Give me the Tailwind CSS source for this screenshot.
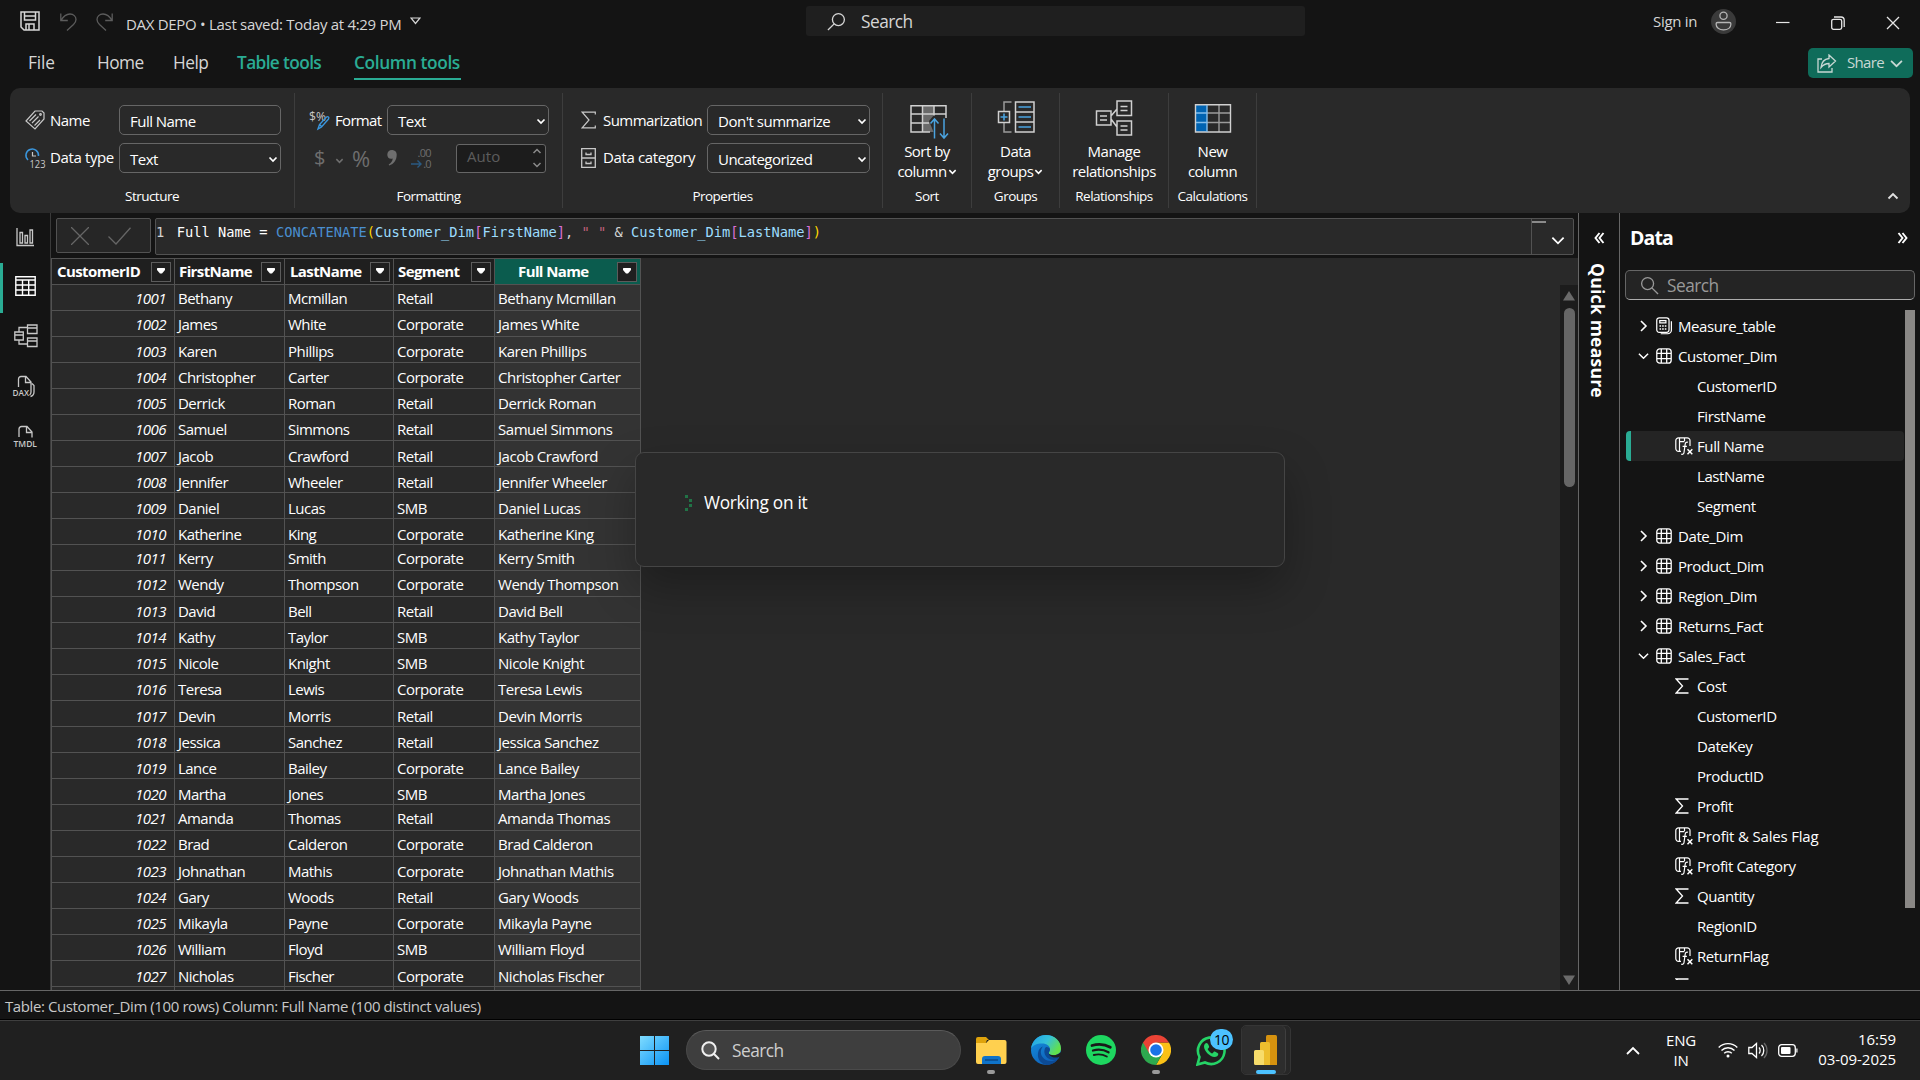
<!DOCTYPE html>
<html lang="en">
<head>
<meta charset="utf-8">
<title>DAX DEPO</title>
<script src="https://cdn.jsdelivr.net/npm/@tailwindcss/browser@4"></script>
</head>
<body class="w-[1920px] h-[1080px] overflow-hidden bg-[#141414] text-white font-['Open_Sans','Noto_Sans',sans-serif] text-[15px] tracking-[-0.035em] whitespace-nowrap flex flex-col relative">

<svg class="hidden">
  <symbol id="i-down" viewBox="0 0 10 10"><path d="M1.500 3.500L5 7l3.500-3.500" fill="none" stroke="currentColor" stroke-width="1.700"/></symbol>
  <symbol id="i-right" viewBox="0 0 10 16"><path d="M2 3l5 5-5 5" fill="none" stroke="currentColor" stroke-width="1.600"/></symbol>
  <symbol id="i-open" viewBox="0 0 12 8"><path d="M1 1.500l5 5 5-5" fill="none" stroke="currentColor" stroke-width="1.600"/></symbol>
  <symbol id="i-search" viewBox="0 0 20 20"><g fill="none" stroke="currentColor" stroke-width="1.400"><circle cx="12" cy="8" r="6.300"/><path d="M7.500 12.500L1 19"/></g></symbol>
  <symbol id="i-table" viewBox="0 0 16 16"><g fill="none" stroke="currentColor" stroke-width="1.300"><rect x=".8" y=".8" width="14.400" height="14.400" rx="3"/><path d="M5.300 1v14M10.700 1v14M1 5.300h14M1 10.700h14"/></g></symbol>
  <symbol id="i-measure" viewBox="0 0 18 19"><g fill="none" stroke="currentColor" stroke-width="1.300"><rect x=".8" y=".8" width="13" height="15.400" rx="2.600"/><path d="M16.300 4.500v9.200a4 4 0 0 1-4 4H5M4 3.800h6.500v2.400H4z"/></g><g fill="currentColor"><path d="M3.700 8.600h1.700v1.700H3.700zM6.500 8.600h1.700v1.700H6.500zM9.300 8.600H11v1.700H9.300zM3.700 11.800h1.700v1.700H3.700zM6.500 11.800h1.700v1.700H6.500zM9.300 11.800H11v1.700H9.300z"/></g></symbol>
  <symbol id="i-sigma" viewBox="0 0 15 18"><path d="M14.300 3.500V1.200H1.200L8 9l-6.800 7.800h13.100v-2.300" fill="none" stroke="currentColor" stroke-width="1.200"/></symbol>
  <symbol id="i-sum" viewBox="0 0 14 16"><path d="M13.500 1H1.200L7.500 8 1.200 15h12.300" fill="none" stroke="currentColor" stroke-width="1.300"/></symbol>
  <symbol id="i-calc" viewBox="0 0 18 18"><g fill="none" stroke="currentColor" stroke-width="1.200"><path d="M6 14.400H3.600A2.800 2.800 0 0 1 .8 11.600V3.600A2.800 2.800 0 0 1 3.600.800h8.600A2.800 2.800 0 0 1 15 3.600V9M4.500 1v13.300M4.500 4.600h5M9.500 1v3"/><path d="M13 5.300c-1.700-.6-2.600.3-2.800 1.700L9 15.500c-.2 1.500-1.200 2.100-2.700 1.600M7.600 9.400h4.300"/><path d="M12.500 12.300l4.800 5M17.300 12.300l-4.800 5" stroke-width="1.500"/></g></symbol>
  <symbol id="i-filter" viewBox="0 0 8 6"><path d="M0 .5Q0 0 .5 0h7Q8 0 8 .5V2L5 5.500H3L0 2z" fill="#fff"/></symbol>
</svg>

<!-- title bar -->
<header class="h-[45px] shrink-0 flex items-start text-[#d6d6d6]">
  <svg class="ml-[20px] mt-[11px] w-[20px] h-[20px] shrink-0" viewBox="0 0 20 20" fill="none" stroke="#d6d6d6" stroke-width="1.500"><path d="M1 1h18v18H4l-3-3zM4.500 1v8h11V1M6 19v-6h8v6M9 13v6M4.500 5h11" /></svg>
  <svg class="ml-[20px] mt-[13px] w-[17px] h-[18px] shrink-0" viewBox="0 0 17 18" fill="none" stroke="#5c5c5c" stroke-width="1.300"><path d="M.8.500v7h7M1 7.500C3.500 3 6.500 1 10 1c3.500 0 6 2.500 6 5.500 0 2-1 3.500-2.500 5L7 17.500"/></svg>
  <svg class="ml-[19px] mt-[13px] w-[17px] h-[18px] shrink-0" viewBox="0 0 17 18" fill="none" stroke="#5c5c5c" stroke-width="1.300"><path d="M16.200.500v7h-7M16 7.500C13.500 3 10.500 1 7 1 3.500 1 1 3.500 1 6.500c0 2 1 3.500 2.500 5l6.500 6"/></svg>
  <span class="ml-[13px] mt-[13px] w-[284px] leading-[22px] tracking-[-0.020em]">DAX DEPO • Last saved: Today at 4:29 PM</span>
  <svg class="mt-[17px] w-[11px] h-[8px] shrink-0" viewBox="0 0 11 8" fill="none" stroke="#d6d6d6" stroke-width="1.200"><path d="M1 1h9L5.500 6.500z"/></svg>
  <div class="ml-[385px] mt-[6px] w-[499px] h-[30px] rounded-[3px] bg-[#1f1f1f] flex items-center pl-[21px] text-[17.300px]">
    <svg class="w-[19px] h-[19px]"><use href="#i-search"/></svg><span class="ml-[15px] mt-px tracking-[-0.030em]">Search</span>
  </div>
  <span class="ml-[348px] mt-[10px] w-[58px] leading-[22px] tracking-[-0.020em]">Sign in</span>
  <svg class="mt-[9px] w-[25px] h-[25px] shrink-0" viewBox="0 0 25 25"><circle cx="12.500" cy="12.500" r="12.500" fill="#3a3a3a"/><g fill="none" stroke="#b5b5b5" stroke-width="1.300"><circle cx="12.500" cy="6.800" r="3.600"/><path d="M6.500 13.500h12a1.400 1.400 0 0 1 1.400 1.400c0 3.600-3 6-7.400 6s-7.400-2.400-7.400-6a1.400 1.400 0 0 1 1.400-1.400z"/></g></svg>
  <svg class="ml-[40px] mt-[15px] w-[14px] h-[14px] shrink-0" viewBox="0 0 14 14" stroke="#e6e6e6" stroke-width="1.200"><path d="M0 7.500h13.500"/></svg>
  <svg class="ml-[41px] mt-[16px] w-[14px] h-[14px] shrink-0" viewBox="0 0 14 14" fill="none" stroke="#e6e6e6" stroke-width="1.300"><rect x=".7" y="3.300" width="10" height="10" rx="1.800"/><path d="M3 1h7a3.200 3.200 0 0 1 3.200 3.200V11"/></svg>
  <svg class="ml-[41px] mt-[16px] w-[14px] h-[14px] shrink-0" viewBox="0 0 14 14" stroke="#e6e6e6" stroke-width="1.300"><path d="M1 1l12 12M13 1L1 13"/></svg>
</header>

<!-- ribbon tabs -->
<nav class="h-[43px] shrink-0 flex items-start text-[17.300px] leading-[24px] text-[#d6d6d6] pl-[28px]">
  <span class="w-[69px] mt-[6px] tracking-[-0.010em]">File</span>
  <span class="w-[76px] mt-[6px]">Home</span>
  <span class="w-[64px] mt-[6px]">Help</span>
  <span class="w-[117px] mt-[6px] font-semibold text-[#2aac94] tracking-[-0.036em]">Table tools</span>
  <span class="w-[107px] mt-[6px] h-[29px] font-semibold text-[#2aac94] border-b-2 border-[#2aac94] tracking-[-0.022em]">Column tools</span>
  <button class="ml-[1347px] mt-[3px] w-[105px] h-[30px] rounded-[5px] bg-[#0f6c5a] flex items-center pl-[9px] text-[15px] text-[#c8d8d4]">
    <svg class="w-[20px] h-[19px]" viewBox="0 0 20 19" fill="none" stroke="#c8d8d4" stroke-width="1.300"><path d="M5 5H1v13h14v-4"/><path d="M12 1l6.500 6-6.500 6V9.500C8.500 9.500 6 11 4 13.500 4.500 8.500 7.500 5 12 4.500z"/></svg>
    <span class="ml-[10px] w-[43px] mb-[2px] text-left tracking-[-0.045em]">Share</span>
    <svg class="w-[13px] h-[9px]" viewBox="0 0 12 8"><use href="#i-open"/></svg>
  </button>
</nav>

<!-- ribbon -->
<section class="mx-[10px] h-[125px] shrink-0 rounded-[10px] bg-[#292929] flex py-[5px] text-[15px] relative">
  <div class="w-[285px] border-r border-[#3d3d3d] flex flex-col pt-3">
    <div class="h-[30px] flex items-center pl-[15px]">
      <svg class="w-[20px] h-[20px]" viewBox="0 0 20 20" fill="none" stroke="#c8c8c8" stroke-width="1.200"><path d="M10 1h7l2 2v6l-9 10L1 11zM4.500 11L11 4.500M7 13l6.500-6.500M9.500 15.500L15 10"/><circle cx="15.500" cy="4.500" r=".8"/></svg>
      <span class="ml-[5px] w-[69px]">Name</span>
      <div class="w-[162px] h-[30px] rounded-[5px] border border-[#666] pl-[10px] leading-[30px]">Full Name</div>
    </div>
    <div class="mt-2 h-[30px] flex items-center pl-[15px]">
      <svg class="w-[21px] h-[21px] overflow-visible" viewBox="0 0 21 21" fill="none" stroke-width="1.500"><path d="M3 12A6.300 6.300 0 1 1 13.500 8" stroke="#3a96dd"/><path d="M7.500 4v4H11" stroke="#c8c8c8" stroke-width="1.200"/><text x="4.500" y="20" font-size="10" letter-spacing="0" fill="#c8c8c8" textLength="16" lengthAdjust="spacingAndGlyphs">123</text></svg>
      <span class="ml-[4px] w-[69px] mb-[2px] tracking-[-0.025em]">Data type</span>
      <div class="w-[162px] h-[30px] rounded-[5px] border border-[#666] pl-[10px] pr-[2px] pt-[2px] leading-[28px] flex items-center justify-between"><span>Text</span><svg class="w-[10px] h-[10px]"><use href="#i-down"/></svg></div>
    </div>
    <div class="mt-[13px] text-center text-[13.500px] leading-5">Structure</div>
  </div>
  <div class="w-[268px] border-r border-[#3d3d3d] flex flex-col pt-3">
    <div class="h-[30px] flex items-center pl-[14px]">
      <svg class="w-[21px] h-[21px] overflow-visible" viewBox="0 0 21 21"><text x="0" y="11" font-size="12" letter-spacing="0" fill="#c8c8c8" textLength="17" lengthAdjust="spacingAndGlyphs">$%</text><path d="M9 19l1.500-4.500 7-7.500c1.500-1 3 .5 2 2l-7 8zM10.500 14.500l2.500 2.500" fill="none" stroke="#3a96dd" stroke-width="1.400"/></svg>
      <span class="ml-[5px] w-[52px] tracking-[-0.045em]">Format</span>
      <div class="w-[162px] h-[30px] rounded-[5px] border border-[#666] pl-[10px] pr-[2px] pt-[2px] leading-[28px] flex items-center justify-between"><span>Text</span><svg class="w-[10px] h-[10px]"><use href="#i-down"/></svg></div>
    </div>
    <div class="mt-2 h-[30px] flex items-center pl-[19px] text-[#6e6e6e]">
      <span class="w-[21px] text-[20px]">$</span><svg class="w-[9px] h-[9px] mt-1"><use href="#i-down"/></svg>
      <span class="ml-[8px] w-[35px] text-[22px] tracking-normal">%</span>
      <svg class="w-[10px] h-[16px]" viewBox="0 0 10 16"><path d="M5 0a4.500 4.500 0 0 1 4.700 4.800C9.700 10 7 14 2.200 15.600L1.700 14.500c2.600-1.600 3.900-3.500 4-6C2.500 9.500.3 7.500.3 4.700.3 2 2.300 0 5 0z" fill="#6e6e6e"/></svg>
      <div class="ml-[14px] w-[22px] h-[22px] flex flex-col items-end text-[11px] leading-[11px] tracking-[-0.060em]">
        <span class="h-[11px] mr-[2px]">.00</span>
        <span class="h-[11px] mr-[2px] flex items-center"><svg class="w-[11px] h-[8px] mr-px" viewBox="0 0 11 8"><path d="M0 4h10M6.500.500L10 4 6.500 7.500" stroke="#2a5a82" stroke-width="1.400" fill="none"/></svg>.0</span>
      </div>
      <div class="ml-[23px] w-[90px] h-[29px] rounded-[3px] border border-[#666] bg-[#1c1c1c] pl-[10px] pr-[3px] flex items-center justify-between text-[15px] text-[#5c5c5c]"><span class="tracking-[0.005em] mb-[4px]">Auto</span>
        <svg class="w-[10px] h-[22px] text-[#8a8a8a]" viewBox="0 0 10 22" fill="none" stroke="currentColor" stroke-width="1.500"><path d="M1.500 6L5 2.500 8.500 6M1.500 16L5 19.500 8.500 16"/></svg></div>
    </div>
    <div class="mt-[13px] text-center text-[13.500px] leading-5">Formatting</div>
  </div>
  <div class="w-[320px] border-r border-[#3d3d3d] flex flex-col pt-3">
    <div class="h-[30px] flex items-center pl-[18px]">
      <svg class="w-[15px] h-[18px] text-[#c8c8c8]"><use href="#i-sigma"/></svg>
      <span class="ml-[7px] w-[104px] tracking-[-0.036em]">Summarization</span>
      <div class="w-[163px] h-[30px] rounded-[5px] border border-[#666] pl-[10px] pr-[2px] pt-[2px] leading-[28px] flex items-center justify-between"><span class="tracking-[-0.032em]">Don't summarize</span><svg class="w-[10px] h-[10px]"><use href="#i-down"/></svg></div>
    </div>
    <div class="mt-2 h-[30px] flex items-center pl-[18px]">
      <svg class="w-[15px] h-[20px]" viewBox="0 0 15 20" fill="none" stroke="#c8c8c8" stroke-width="1.300"><path d="M.7.700h13.600v18.600H.7zM.7 10h13.600M5 4.500v2h5v-2M5 13.500v2h5v-2"/></svg>
      <span class="ml-[7px] w-[104px] mb-[2px] tracking-[-0.025em]">Data category</span>
      <div class="w-[163px] h-[30px] rounded-[5px] border border-[#666] pl-[10px] pr-[2px] pt-[2px] leading-[28px] flex items-center justify-between"><span>Uncategorized</span><svg class="w-[10px] h-[10px]"><use href="#i-down"/></svg></div>
    </div>
    <div class="mt-[13px] text-center text-[13.500px] leading-5">Properties</div>
  </div>
  <div class="w-[89px] border-r border-[#3d3d3d] flex flex-col items-center leading-5">
    <svg class="mt-[7px] ml-[3px] h-[40px] w-[40px]" viewBox="0 0 40 40"><path d="M13 5h12v27H13z" fill="#6a6a6a"/><g fill="none" stroke="#d0d0d0" stroke-width="1.500"><path d="M37 18V5.700H2V32h19M2 14h35M2 23h18M13.500 5.500V32M25 5.500V18" /></g><path d="M20 21l5-6 4 5v-2h9v15H25z" fill="#292929"/><path d="M25.500 38.500V19M21.500 23.500l4-4.500 4 4.500M35 18.500V38M31 33.500l4 4.500 4-4.500" stroke="#4aa3df" stroke-width="1.500" fill="none"/></svg>
    <span class="mt-px">Sort by</span><span class="flex items-center">column<svg class="ml-px w-[9px] h-[9px]"><use href="#i-down"/></svg></span>
    <span class="mt-[5px] text-[13.500px]">Sort</span>
  </div>
  <div class="w-[88px] border-r border-[#3d3d3d] flex flex-col items-center leading-5">
    <svg class="mt-[6px] h-[40px] w-[38px]" viewBox="0 0 38 40"><g fill="none" stroke="#d0d0d0" stroke-width="1.500"><path d="M18.500 3H37v30H18.500zM18.500 13H37M18.500 23H37"/><path d="M14.500 3H7v9M7 24v9h7.500" stroke="#9a9a9a"/><path d="M1.500 12.500h11v11h-11z"/></g><path d="M21.500 8H34M21.500 18H34M21.500 28H34M7 14.500v7M3.500 18h7" stroke="#4aa3df" stroke-width="1.600"/></svg>
    <span class="mt-[2px]">Data</span><span class="flex items-center">groups<svg class="ml-px w-[9px] h-[9px]"><use href="#i-down"/></svg></span>
    <span class="mt-[5px] text-[13.500px]">Groups</span>
  </div>
  <div class="w-[109px] border-r border-[#3d3d3d] flex flex-col items-center leading-5">
    <svg class="mt-[6px] h-[40px] w-[38px]" viewBox="0 0 38 40" fill="none" stroke="#d0d0d0" stroke-width="1.500"><path d="M1.500 12h14.500v14H1.500zM22 2h14.500v14.500H22zM22 22h14.500v14H22zM16 17l6-7M16 20l6 8M5 17h7M5 21h7M25.500 7.500h7M25.500 11.500h7M25.500 27h7M25.500 31h7"/></svg>
    <span class="mt-[2px]">Manage</span><span>relationships</span>
    <span class="mt-[5px] text-[13.500px]">Relationships</span>
  </div>
  <div class="w-[88px] border-r border-[#3d3d3d] flex flex-col items-center leading-5">
    <svg class="mt-[6px] h-[40px] w-[38px]" viewBox="0 0 38 40"><path d="M1.500 5.500H13V33H1.500z" fill="#0063b1"/><g fill="none" stroke-width="1.400"><path d="M13 14h23M13 23.500h23M25 6v27" stroke="#9a9a9a"/><path d="M1.500 5.700h35V33h-35z" stroke="#d0d0d0"/><path d="M13 6v27M2 14h11M2 23.500h11" stroke="#83beec"/></g></svg>
    <span class="mt-[2px]">New</span><span>column</span>
    <span class="mt-[5px] text-[13.500px]">Calculations</span>
  </div>
  <svg class="ml-auto mr-[11px] self-end mb-[8px] w-[12px] h-[8px]" viewBox="0 0 12 8" fill="none" stroke="#e0e0e0" stroke-width="1.900"><path d="M1.500 6.500L6 2l4.500 4.500"/></svg>
</section>

<!-- workspace -->
<main class="h-[777px] shrink-0 flex overflow-hidden">
  <aside class="w-[51px] shrink-0 border-r border-[#3a3a3a] flex flex-col text-[#c8c8c8]">
    <div class="h-[50px] flex items-center pl-[16px]"><svg class="mt-[-2px] w-[19px] h-[19px]" viewBox="0 0 19 19" fill="none" stroke="currentColor" stroke-width="1.300"><path d="M1 0v17.500h17M4 4.500h2.500V15H4zM9 7.500h2.500V15H9zM14 2h2.500v13H14z"/></svg></div>
    <div class="h-[50px] flex items-center border-l-[3px] border-[#2aac94] pl-[12px] text-white"><svg class="mt-[-5px] w-[21px] h-[20px]" viewBox="0 0 21 20" fill="none" stroke="currentColor" stroke-width="1.400"><path d="M.8.800h19.400v18.400H.8zM1 4h19M1 9h19M1 14h19M7.500 4v15M13.700 4v15"/></svg></div>
    <div class="h-[50px] flex items-center pl-[14px]"><svg class="mt-[-4px] w-[24px] h-[24px]" viewBox="0 0 24 24" fill="none" stroke="currentColor" stroke-width="1.300"><path d="M.8 8h8.500v8H.8zM.8 11h8.500M13.500 1H23v8.500h-9.500zM13.500 4H23M13.500 14H23v8.500h-9.500zM13.500 17H23M5 8V3.500h8.500M5 16v4h8.500"/></svg></div>
    <div class="h-[50px] flex items-center pl-[12px]"><svg class="mt-[-3px] w-[24px] h-[23px]" viewBox="0 0 24 23" fill="none" stroke="currentColor" stroke-width="1.300"><path d="M6.500 12V4a2.500 2.500 0 0 1 2.500-2.500h5L19 7v10c0 1.500-.5 2.500-1.500 3M13.500 1.500v6H19M20 8.500l2 2V17c0 2.500-1.500 4-3.500 4.500"/><text x=".5" y="21" font-size="9" letter-spacing="0" font-weight="600" fill="currentColor" stroke="none" textLength="16.500" lengthAdjust="spacingAndGlyphs">DAX</text></svg></div>
    <div class="h-[50px] flex items-center pl-[13px]"><svg class="mt-[-3px] w-[25px] h-[23px] overflow-visible" viewBox="0 0 25 23" fill="none" stroke="currentColor" stroke-width="1.300"><path d="M6 12V4a2.500 2.500 0 0 1 2.500-2.500H14L19 7v5.500M13.500 1.500v6H19"/><text x=".5" y="21.500" font-size="9.500" letter-spacing="0" font-weight="600" fill="currentColor" stroke="none" textLength="23.500" lengthAdjust="spacingAndGlyphs">TMDL</text></svg></div>
  </aside>

  <div class="w-[1527px] shrink-0 flex flex-col">
    <div class="h-[45px] shrink-0 pl-[5px] pt-[5px] flex">
      <div class="w-[95px] h-[35px] rounded-[2px] border border-[#525252] bg-[#262626] flex items-center">
        <svg class="ml-[14px] w-[18px] h-[18px]" viewBox="0 0 18 18" stroke="#666" stroke-width="1.300"><path d="M0 0l18 18M18 0L0 18"/></svg>
        <svg class="ml-[19px] w-[23px] h-[18px]" viewBox="0 0 23 18" stroke="#666" stroke-width="1.300" fill="none"><path d="M.5 9.500l7.500 7.500L22.500.8"/></svg>
      </div>
      <div class="ml-1 w-[1419px] h-[37px] rounded-[2px] border border-[#525252] bg-[#292929] flex justify-between">
        <pre class="pt-[3px] tracking-normal font-['DejaVu_Sans_Mono',monospace] text-[13.720px] leading-[20px] text-[#d4d4d4]">1<span class="inline-block w-[12.500px]"></span><span class="text-white">Full Name = </span><span class="text-[#4a8fd0]">CONCATENATE</span><span class="text-[#ffd700]">(</span><span class="text-[#9cdcfe]">Customer_Dim</span><span class="text-[#da70d6]">[</span><span class="text-[#9cdcfe]">FirstName</span><span class="text-[#da70d6]">]</span>, <span class="text-[#c0607a]">" "</span> &amp; <span class="text-[#9cdcfe]">Customer_Dim</span><span class="text-[#da70d6]">[</span><span class="text-[#9cdcfe]">LastName</span><span class="text-[#da70d6]">]</span><span class="text-[#ffd700]">)</span></pre>
        <div class="w-[42px] border-l border-[#525252] flex flex-col">
          <div class="mt-[2px] h-[2px] w-[14px] bg-[#8a8a8a]"></div>
          <svg class="mt-[13px] ml-[19px] w-[14px] h-[9px]" viewBox="0 0 12 8"><use href="#i-open"/></svg>
        </div>
      </div>
    </div>
    <div class="grow min-h-0 bg-[#292929] flex">
      <div id="grid" class="w-[590px] h-full overflow-hidden border-l border-[#525252] shrink-0">
        <div class="h-[27px] border-y border-[#525252] bg-[#1f1f1f] grid grid-cols-[123px_110px_109px_101px_146px] font-bold text-[15px] tracking-[-0.040em] leading-[25px]" id="head"></div>
      </div>
      <div class="grow"></div>
      <div class="mt-[27px] w-[18px] bg-[#1c1c1c] flex flex-col items-center pt-[6px]">
        <svg class="w-[12px] h-[10px]" viewBox="0 0 12 10"><path d="M6 0l6 9.500H0z" fill="#6a6a6a"/></svg>
        <div class="mt-[7px] w-[11px] h-[179px] rounded-full bg-[#666]"></div>
        <svg class="mt-auto mb-[5px] w-[12px] h-[10px]" viewBox="0 0 12 10"><path d="M6 10l6-9.500H0z" fill="#6a6a6a"/></svg>
      </div>
    </div>
  </div>

  <section class="w-[41px] shrink-0 border-l border-[#666] flex flex-col items-center">
    <svg class="mt-[19px] w-[11px] h-[12px]" viewBox="0 0 11 12" fill="none" stroke="#fff" stroke-width="1.900"><path d="M5.500 1L1.500 6l4 5M9.500 1l-4 5 4 5"/></svg>
    <div class="mt-[19px] mr-[2px] [writing-mode:vertical-rl] leading-[24px] text-[17.500px] font-bold tracking-[0.014em]">Quick measure</div>
  </section>

  <section class="w-[301px] shrink-0 border-l border-[#666] pl-[5px] flex flex-col">
    <div class="h-[57px] flex items-center pl-[5px] pr-[12px] pb-[8px]">
      <span class="text-[19.500px] font-bold tracking-[-0.045em]">Data</span>
      <svg class="ml-auto w-[11px] h-[12px]" viewBox="0 0 11 12" fill="none" stroke="#fff" stroke-width="1.900"><path d="M1.500 1l4 5-4 5M5.500 1l4 5-4 5"/></svg>
    </div>
    <div class="w-[290px] h-[30px] rounded-[5px] border border-[#666] border-b-[#adadad] bg-[#242424] flex items-center pl-[14px] text-[17.300px] text-[#999]">
      <svg class="w-[19px] h-[19px] -scale-x-100"><use href="#i-search"/></svg><span class="ml-[8px] mt-px">Search</span>
    </div>
    <div class="mt-[10px] h-[670px] w-[290px] flex overflow-hidden">
      <div id="tree" class="w-[280px] mt-px shrink-0 leading-[30px] text-[15px] tracking-[-0.027em]"></div>
      <div class="w-[10px] h-[598px] bg-[#8a8886]"></div>
    </div>
  </section>
</main>

<footer class="h-[30px] shrink-0 border-t border-[#666] border-b border-b-black pl-[5px] leading-[31px] text-[15px] tracking-[-0.027em] text-[#c8c8c8]">Table: Customer_Dim (100 rows) Column: Full Name (100 distinct values)</footer>

<!-- taskbar -->
<div class="h-[60px] shrink-0 border-t border-[#3f3f3f] bg-[#202020] flex items-start">
  <svg class="ml-[640px] mt-[15px] w-[29px] h-[29px] shrink-0" viewBox="0 0 29 29"><defs><linearGradient id="w" x1="0" y1="0" x2="1" y2="1"><stop offset="0" stop-color="#7fdcff"/><stop offset="1" stop-color="#0a93f5"/></linearGradient></defs><path d="M0 0h14v14H0zM15 0h14v14H15zM0 15h14v14H0zM15 15h14v14H15z" fill="url(#w)"/></svg>
  <div class="ml-[17px] mt-[9px] w-[275px] h-[40px] shrink-0 rounded-full bg-[#3e3e3e] border border-[#4a4a4a] border-t-[#5a5a5a] flex items-center pl-[14px] text-[17.300px] text-[#cfcfcf]">
    <svg class="w-[19px] h-[19px]" viewBox="0 0 19 19" fill="none" stroke="#f0f0f0" stroke-width="2"><circle cx="8" cy="8" r="6.700" fill="#555"/><path d="M12.800 12.800L18 18"/></svg><span class="ml-[12px] mt-px">Search</span>
  </div>
  <div class="ml-[15px] mt-[15px] w-[30px] shrink-0 flex flex-col items-center">
    <svg class="w-[31px] h-[29px]" viewBox="0 0 31 29"><path d="M0 3a2 2 0 0 1 2-2h8l3 3h-2l-2 5H0z" fill="#dfa30c"/><path d="M0 7h10l3-3h15.500a2 2 0 0 1 2 2v20a2 2 0 0 1-2 2H2a2 2 0 0 1-2-2z" fill="#ffd04f"/><path d="M6 28v-5a3 3 0 0 1 3-3h13a3 3 0 0 1 3 3v5z" fill="#0f73c9"/><path d="M9 24h13" stroke="#0a3f78" stroke-width="1.200"/></svg>
    <div class="mt-[5px] w-2 h-1 rounded-full bg-[#9a9a9a]"></div>
  </div>
  <svg class="ml-[25px] mt-[14px] w-[30px] h-[30px] shrink-0" viewBox="0 0 30 30"><defs><linearGradient id="e1" x1="0" y1="0" x2="1" y2=".5"><stop offset="0" stop-color="#1e9fe8"/><stop offset=".55" stop-color="#35c1d8"/><stop offset="1" stop-color="#62e04c"/></linearGradient><linearGradient id="e2" x1="0" y1="0" x2=".7" y2="1"><stop offset="0" stop-color="#1593e0"/><stop offset="1" stop-color="#0e5cb5"/></linearGradient></defs><circle cx="15" cy="15" r="15" fill="url(#e2)"/><path d="M0 14C.8 6 7 0 15 0c8.500 0 15 6 15 13.500 0 4-3 6.800-7 6.800-3 0-5.300-1-5.300-2.300 0-1 1.300-1.500 1.300-4 0-2.800-3-5.500-8-5.500C5.500 8.500 1 10.500 0 14z" fill="url(#e1)"/><path d="M12 11.500c-2.500 2.500-3 7-.5 10.500 3 4.500 9.500 5.500 15.500 2-3 4-7 6-11.500 6C10 29 6 24 7 18c.5-3.500 2.500-5.800 5-6.500z" fill="#0c4a94"/><path d="M17.700 18c0 1.300 2.300 2.300 5.300 2.300 2.300 0 4.500-1 5.800-2.500.5 2-.5 4.700-1.800 6.200-6 2.500-12.500-.5-13.500-6-.3-2.500 0-4.500 1.500-6 2.500 0 4 1 4 2.500s-1.300 2.500-1.300 3.500z" fill="#0c4a94"/><path d="M17.700 18c0 1.300 2.300 2.300 5.300 2.300 2.300 0 4.500-1 7-3.300.5 1.700 0 3.500-1.300 4.700-5 2-10.500.3-11-3.700z" fill="#202020"/></svg>
  <svg class="ml-[25px] mt-[14px] w-[30px] h-[30px] shrink-0" viewBox="0 0 30 30"><circle cx="15" cy="15" r="15" fill="#1ed760"/><g fill="none" stroke="#191919" stroke-linecap="round"><path d="M6 10.500c6-1.700 13-1.200 18.300 1.800" stroke-width="2.800"/><path d="M7 15.500c5.500-1.500 11-.8 15.500 1.800" stroke-width="2.300"/><path d="M7.800 20c4.500-1.200 9-.7 13 1.500" stroke-width="1.900"/></g></svg>
  <div class="ml-[25px] mt-[14px] w-[30px] shrink-0 flex flex-col items-center">
    <svg class="w-[30px] h-[30px]" viewBox="0 0 30 30"><path d="M15 15l0 15A15 15 0 0 1 2 7.500z" fill="#2da94f"/><path d="M15 7.500h13a15 15 0 0 1-13 22.500l6.500-11.200z" fill="#fbc116"/><path d="M15 7.500h13A15 15 0 0 0 2 7.500l6.500 11.200z" fill="#ea4335"/><path d="M8.500 18.700L15 15l6.500 3.700L15 30z" fill="#2da94f"/><circle cx="15" cy="15" r="7.500" fill="#fff"/><circle cx="15" cy="15" r="5.800" fill="#1a73e8"/></svg>
    <div class="mt-[5px] w-2 h-1 rounded-full bg-[#9a9a9a]"></div>
  </div>
  <div class="ml-[25px] mt-[14px] w-[30px] h-[31px] shrink-0 relative">
    <svg class="w-[30px] h-[31px]" viewBox="0 0 30 31"><path d="M1.500 29.500l2-7.500A13.300 13.300 0 1 1 9 27.500z" fill="#202020" stroke="#25d366" stroke-width="2.600"/><path d="M10.500 8c-1 0-2.500 1.500-2.500 3.500 0 4.500 6 10.500 10.500 10.500 2 0 3.800-1.300 3.800-3 0-.8-3.300-2.400-4-2.400-.8 0-1.300 2-2.300 1.800-1.500-.5-4-2.800-4.300-4.100-.2-.8 1.500-1.500 1.500-2.300S12 8 10.500 8z" fill="#25d366"/></svg>
    <div class="absolute left-[14px] top-[-6px] w-[23px] h-[21px] rounded-full bg-[#4cc2ff] text-black text-[14px] leading-[21px] text-center">10</div>
  </div>
  <div class="ml-[15px] mt-[4px] w-[50px] h-[50px] shrink-0 rounded-[5px] bg-[#272727] border border-[#353535] flex">
    <div class="w-[44px] h-full rounded-[5px] bg-[#2d2d2d] border-r border-[#3f3f3f] flex flex-col items-center">
      <svg class="mt-[9px] ml-[4px] w-[23px] h-[30px]" viewBox="0 0 23 30"><path d="M12 1.500A1.500 1.500 0 0 1 13.500 0H21.500A1.500 1.500 0 0 1 23 1.500V30H12z" fill="#d6920f"/><path d="M6 8.500A1.500 1.500 0 0 1 7.500 7h7A1.500 1.500 0 0 1 16 8.500V30H6z" fill="#edbe2e"/><path d="M0 16.500A1.500 1.500 0 0 1 1.500 15h7A1.500 1.500 0 0 1 10 16.500V30H1.500A1.500 1.500 0 0 1 0 28.500z" fill="#f7dc6b"/></svg>
      <div class="mt-[5px] ml-[4px] w-5 h-1 rounded-full bg-[#4cc2ff]"></div>
    </div>
  </div>
  <svg class="ml-[335px] mt-[25px] w-[14px] h-[9px] shrink-0" viewBox="0 0 14 9" fill="none" stroke="#fff" stroke-width="1.800"><path d="M1 8l6-6 6 6"/></svg>
  <div class="ml-[20px] mt-[9px] w-[42px] shrink-0 text-center leading-[20px] tracking-[-0.010em]">ENG<br>IN</div>
  <svg class="ml-[16px] mt-[21px] w-[20px] h-[16px] shrink-0" viewBox="0 0 20 16" fill="none" stroke="#fff" stroke-width="1.400"><path d="M.7 5.500a13 13 0 0 1 18.600 0M3.500 8.500a9 9 0 0 1 13 0M6.200 11.300a5.300 5.300 0 0 1 7.600 0"/><circle cx="10" cy="14" r="1.500" fill="#fff" stroke="none"/></svg>
  <svg class="ml-[10px] mt-[21px] w-[20px] h-[17px] shrink-0" viewBox="0 0 20 17" fill="none" stroke="#fff" stroke-width="1.300"><path d="M.8 5.500H4l4.500-4v14L4 11.500H.8zM11 5.500c1.500 1.500 1.500 4.500 0 6M13.500 3c3 2.500 3 8.500 0 11"/><path d="M16 1c4 4 4 11 0 15" stroke="#666"/></svg>
  <svg class="ml-[10px] mt-[23px] w-[20px] h-[13px] shrink-0" viewBox="0 0 20 13"><rect x=".7" y=".7" width="16.600" height="11.600" rx="3" fill="none" stroke="#fff" stroke-width="1.300"/><rect x="3" y="3" width="9.500" height="7" rx="1" fill="#fff"/><path d="M18.300 4.500h1.200v4h-1.200z" fill="#fff"/></svg>
  <div class="ml-auto mt-[8px] pr-[24px] text-right leading-[20px] tracking-[-0.003em]">16:59<br>03-09-2025</div>
</div>

<!-- progress dialog -->
<div class="absolute left-[635px] top-[452px] w-[650px] h-[115px] rounded-[9px] border border-[#454545] bg-[#292929] shadow-[0_20px_45px_rgba(0,0,0,0.28)] pl-[49px] pt-[38px] flex items-start text-[17.300px] leading-[24px] tracking-[-0.018em]">
  <svg class="mt-[4px] w-[8px] h-[16px]" viewBox="0 0 8 16" fill="#217346"><path d="M0 0h3v3H0zM4 4h3v3H4zM4 9h3v3H4zM0 13h3v3H0z"/></svg>
  <span class="ml-[11px]">Working on it</span>
</div>

<script>
const heads = [['CustomerID', 'pl-[5px]'], ['FirstName', 'pl-[4px]'], ['LastName', 'pl-[5px]'], ['Segment', 'pl-[4px]'], ['Full Name', 'pl-[23px]']];
document.getElementById('head').innerHTML = heads.map(([t, pad], i) =>
  `<div class="border-r border-[#525252] flex items-center justify-between pr-[3px] ${pad} ${i === 4 ? 'bg-[#0b5c4e]' : ''}"><span>${t}</span><span class="w-[20px] h-[20px] border border-[#5c5c5c] bg-[#1f1f1f] flex justify-center pt-[5px]"><svg class="w-[8px] h-[6px]"><use href="#i-filter"/></svg></span></div>`).join('');

const people = `Bethany Mcmillan Retail|James White Corporate|Karen Phillips Corporate|Christopher Carter Corporate|Derrick Roman Retail|Samuel Simmons Retail|Jacob Crawford Retail|Jennifer Wheeler Retail|Daniel Lucas SMB|Katherine King Corporate|Kerry Smith Corporate|Wendy Thompson Corporate|David Bell Retail|Kathy Taylor SMB|Nicole Knight SMB|Teresa Lewis Corporate|Devin Morris Retail|Jessica Sanchez Retail|Lance Bailey Corporate|Martha Jones SMB|Amanda Thomas Retail|Brad Calderon Corporate|Johnathan Mathis Corporate|Gary Woods Retail|Mikayla Payne Corporate|William Floyd SMB|Nicholas Fischer Corporate`.split('|').map(s => s.split(' '));
people.push(['', '', '']);
const cell = 'border-r border-[#525252] pl-[3px]';
document.getElementById('grid').insertAdjacentHTML('beforeend', people.map(([f, l, s], i) => {
  const k = i % 10;
  const lead = k < 2 ? 'leading-[27px]' : k < 6 ? 'leading-[29px]' : 'leading-[31px]';
  return `<div class="h-[26px] border-b border-[#525252] grid grid-rows-[25px] grid-cols-[123px_110px_109px_101px_146px] ${lead}">
    <div class="border-r border-[#525252] pr-[8px] text-right italic">${f ? 1001 + i : ''}</div><div class="${cell}">${f}</div><div class="${cell}">${l}</div><div class="${cell}">${s}</div><div class="${cell} bg-[#333] tracking-[-0.031em]">${f} ${l}</div></div>`;
}).join(''));

const nodes = [['m', 'Measure_table'], ['o', 'Customer_Dim'], ['', 'CustomerID'], ['', 'FirstName'], ['f*', 'Full Name'], ['', 'LastName'], ['', 'Segment'],
  ['c', 'Date_Dim'], ['c', 'Product_Dim'], ['c', 'Region_Dim'], ['c', 'Returns_Fact'], ['o', 'Sales_Fact'], ['s', 'Cost'], ['', 'CustomerID'], ['', 'DateKey'], ['', 'ProductID'],
  ['s', 'Profit'], ['f', 'Profit & Sales Flag'], ['f', 'Profit Category'], ['s', 'Quantity'], ['', 'RegionID'], ['f', 'ReturnFlag'], ['s', '']];
const right = '<svg class="ml-[14px] mr-[7px] w-[10px] h-[16px]"><use href="#i-right"/></svg>';
const open = '<svg class="ml-[13px] mr-[7px] w-[11px] h-[8px]" viewBox="0 0 12 8"><use href="#i-open"/></svg>';
const tbl = '<svg class="w-[16px] h-[16px] mr-[6px]"><use href="#i-table"/></svg>';
const lead = {
  m: right + '<svg class="w-[17px] h-[18px] mr-[5px]" viewBox="0 0 18 19"><use href="#i-measure"/></svg>',
  o: open + tbl, c: right + tbl,
  s: '<svg class="ml-[50px] mr-[8px] w-[14px] h-[16px]"><use href="#i-sum"/></svg>',
  f: '<svg class="ml-[50px] mr-[4px] w-[18px] h-[18px]"><use href="#i-calc"/></svg>',
  'f*': '<svg class="ml-[44px] mr-[4px] w-[18px] h-[18px]"><use href="#i-calc"/></svg>',
  '': '<span class="w-[72px]"></span>'
};
document.getElementById('tree').innerHTML = nodes.map(([k, t]) =>
  `<div class="h-[30px] flex items-center ${k === 'f*' ? 'ml-px w-[278px] bg-[#242424] rounded-[4px] border-l-[5px] border-[#2aac94]' : 'w-[279px]'}">${lead[k]}<span class="${t.includes('&') ? 'tracking-[-0.012em]' : ''}">${t.replace('&', '&amp;')}</span></div>`).join('');
</script>
</body>
</html>
